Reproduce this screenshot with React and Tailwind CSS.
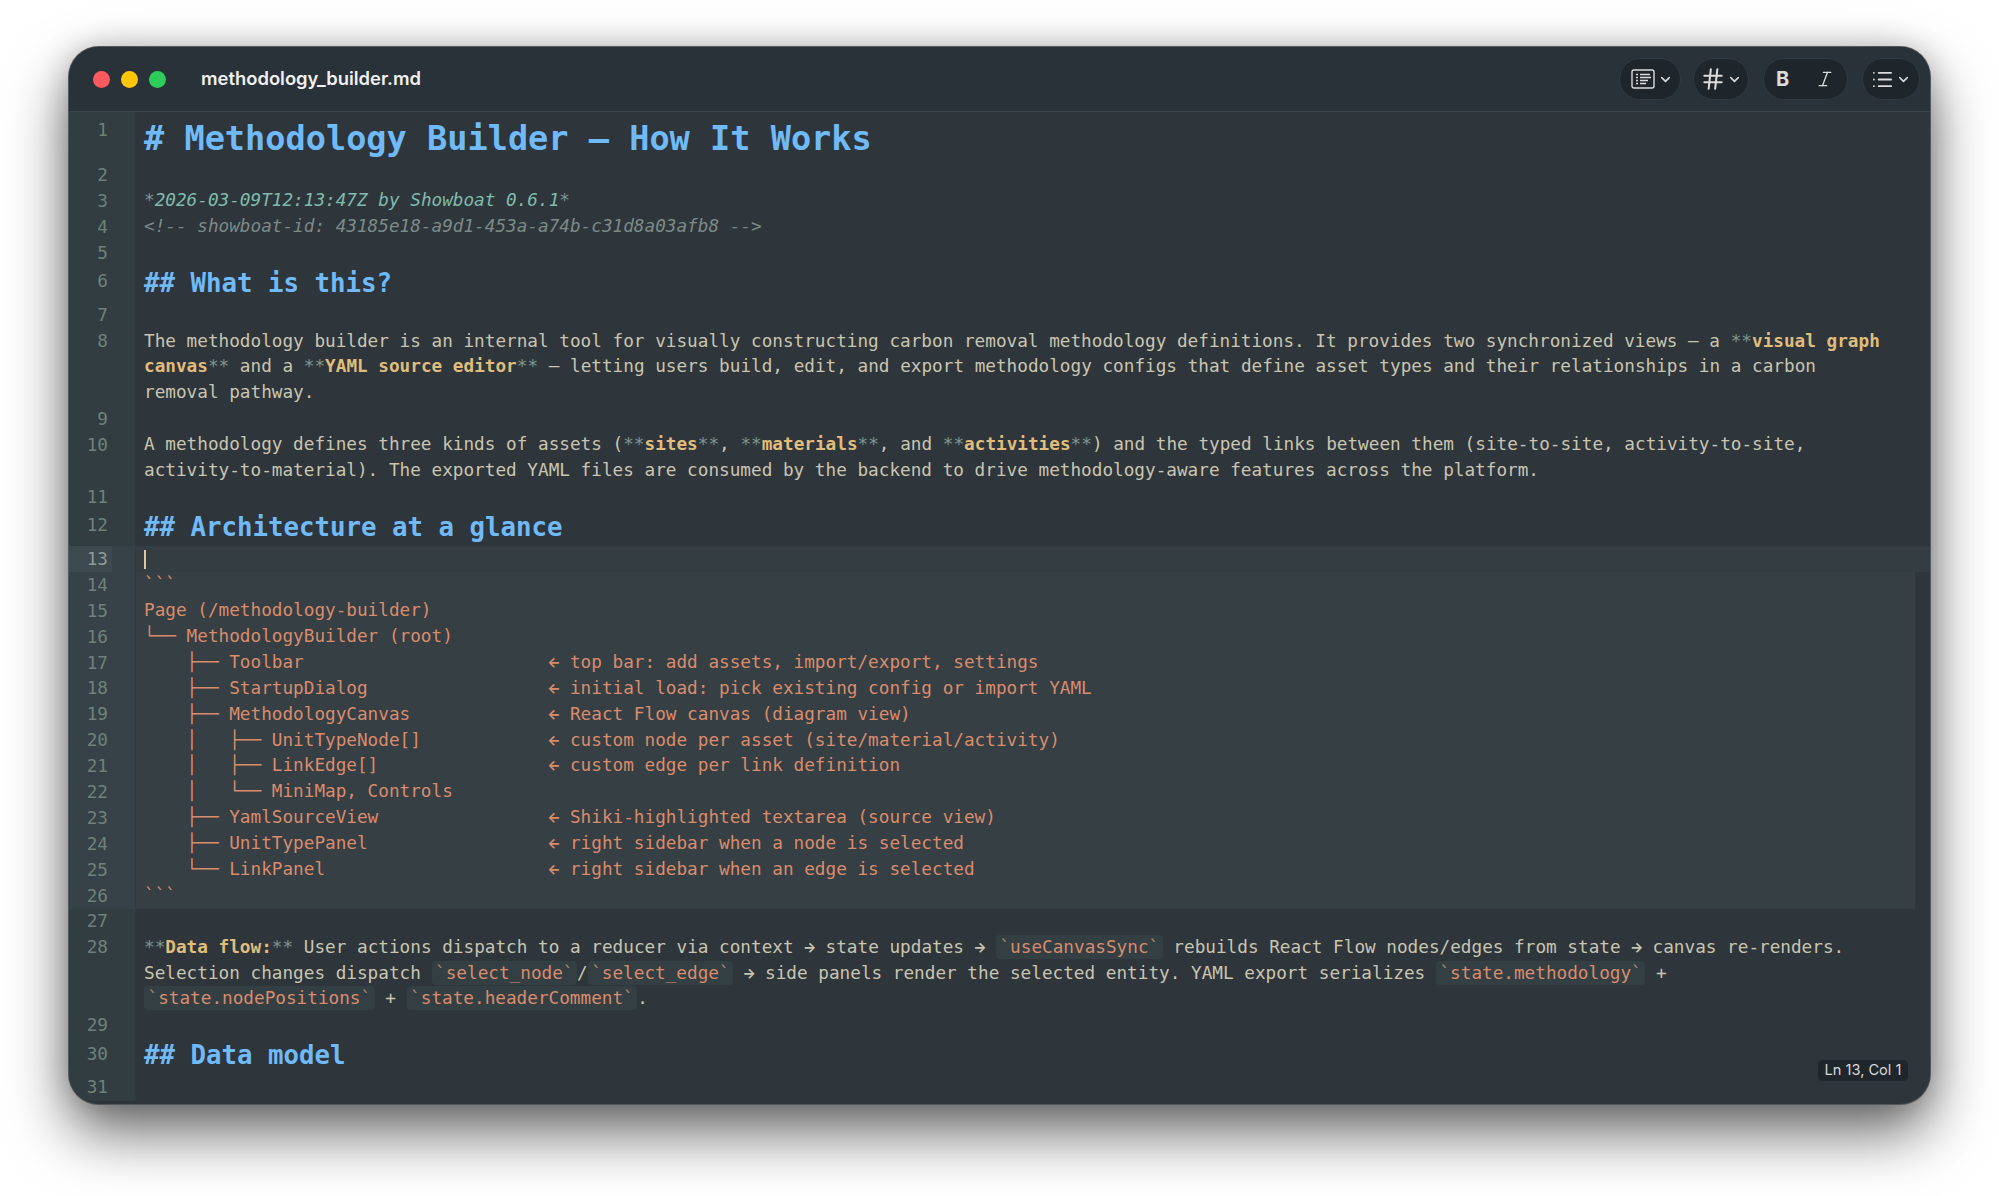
import { Hash, Italic, List, ChevronDown } from "lucide-react";

const mono = "font-['DejaVu_Sans_Mono',monospace]";

// arrows are narrower in the reference font, keep them one cell wide
const Arrow = ({ children }) => (
  <span className="inline-flex w-[1ch] justify-center">
    <span className="-translate-y-[1.5px] font-['Inter',sans-serif] text-[14px] font-bold">{children}</span>
  </span>
);

// inline bits of the markdown highlighting
const Bold = ({ children }) => (
  <>
    <span className="text-[#7f958f]">**</span>
    <span className="font-bold text-[#e0bd7c]">{children}</span>
    <span className="text-[#7f958f]">**</span>
  </>
);

const Code = ({ children }) => (
  <span className="rounded-[4px] bg-[#343f44] px-[3.5px] py-[2px] text-[#d98c6c]">
    <span className="text-[#a98a78]">`</span>
    {children}
    <span className="text-[#a98a78]">`</span>
  </span>
);

function Row({ n, lines, h, numTop = 0, active = false, code = false, children }) {
  const body = lines || [children];
  return (
    <div className={`flex ${active ? "bg-[#343d42]" : ""}`} style={h ? { height: h } : undefined}>
      <div
        className={`w-[67px] shrink-0 border-r border-[#2f393e] ${
          code || active ? "bg-[#364247]" : "bg-[#323d42]"
        }`}
      >
        <div
          className={`flex h-[25.9px] w-[43px] items-center justify-end pr-[4px] text-[17.7px] ${
            active ? "bg-[#3d494e] text-[#8d9c97]" : "text-[#6e8279]"
          }`}
          style={{ marginTop: numTop }}
        >
          {n}
        </div>
      </div>
      <div className={`mr-[15px] min-w-0 flex-1 pl-[8px] ${code ? "bg-[#363f44]" : ""}`}>
        {body.map((line, i) => (
          <div key={i} className="h-[25.9px] whitespace-pre text-[17.7px] leading-[25.9px]">
            {line}
          </div>
        ))}
      </div>
    </div>
  );
}

const H2 = ({ n, numTop = 3, children }) => (
  <Row n={n} h="36.5px" numTop={numTop}>
    <div className="h-[36.5px] text-[25.75px] font-bold leading-[35px] text-[#70baf8]">
      {children}
    </div>
  </Row>
);

const tree = [
  [15, "Page (/methodology-builder)", ""],
  [16, "└── MethodologyBuilder (root)", ""],
  [17, "    ├── Toolbar", "top bar: add assets, import/export, settings"],
  [18, "    ├── StartupDialog", "initial load: pick existing config or import YAML"],
  [19, "    ├── MethodologyCanvas", "React Flow canvas (diagram view)"],
  [20, "    │   ├── UnitTypeNode[]", "custom node per asset (site/material/activity)"],
  [21, "    │   ├── LinkEdge[]", "custom edge per link definition"],
  [22, "    │   └── MiniMap, Controls", ""],
  [23, "    ├── YamlSourceView", "Shiki-highlighted textarea (source view)"],
  [24, "    ├── UnitTypePanel", "right sidebar when a node is selected"],
  [25, "    └── LinkPanel", "right sidebar when an edge is selected"],
];

const Pill = ({ children, className = "" }) => (
  <div
    className={`flex h-[42px] items-center rounded-full border border-[#2f3a42] bg-[#1f262b] text-[#dcdcdc] ${className}`}
  >
    {children}
  </div>
);

const Chevron = () => <ChevronDown size={15} strokeWidth={2.6} className="text-[#d8d8d8]" />;

export default function App() {
  return (
    <div className="min-h-[1196px] bg-white pl-[69px] pt-[47px]">
      <div
        className={`relative h-[1057px] w-[1861px] overflow-hidden rounded-[30px] bg-[#2e353b] shadow-[0_0_0_1px_#54595d,0_28px_60px_rgba(0,0,0,0.6),0_0_30px_rgba(0,0,0,0.2)] ${mono}`}
      >
        {/* title bar */}
        <div className="flex h-[65px] items-center border-b border-[#3a464e] bg-[#2a3239] pl-[24px] pr-[10px]">
          <div className="flex gap-[11px]">
            <span className="size-[17px] rounded-full bg-[#fd5a5f]" />
            <span className="size-[17px] rounded-full bg-[#fdc606]" />
            <span className="size-[17px] rounded-full bg-[#2ecc5a]" />
          </div>
          <div className="ml-[35px] font-['Inter',sans-serif] text-[18.4px] font-semibold text-[#f0f0f0]">
            methodology_builder.md
          </div>
          <div className="ml-auto flex items-center gap-[12px]">
            <Pill className="w-[62px] justify-center gap-[3px] pl-[3px]">
              <svg width="24" height="20" viewBox="0 0 24 20" fill="none" stroke="currentColor" strokeWidth="1.4">
                <rect x="1" y="1" width="22" height="18" rx="2" />
                <path d="M5 5.5h2M9 5.5h10M5 8.5h2M9 8.5h11M5 11.5h2M9 11.5h8M5 14.5h2M9 14.5h6" />
              </svg>
              <Chevron />
            </Pill>
            <Pill className="w-[56px] justify-center gap-[1px]">
              <Hash size={26} strokeWidth={1.9} />
              <Chevron />
            </Pill>
            <Pill className="ml-[2px] w-[85px] justify-center gap-[26px]">
              <span className="font-['Inter',sans-serif] text-[20px] font-bold leading-none">B</span>
              <Italic size={20} strokeWidth={1.6} />
            </Pill>
            <Pill className="ml-[2px] w-[58px] justify-center gap-[2px]">
              <List size={23} strokeWidth={1.9} />
              <Chevron />
            </Pill>
          </div>
        </div>

        {/* editor */}
        <div className="text-[#c9c5b1]">
          <Row n={1} h="50.6px" numTop={5}>
            <div className="h-[50.6px] pt-[2px] text-[33.6px] font-bold leading-[50.6px] text-[#70baf8]">
              # Methodology Builder — How It Works
            </div>
          </Row>
          <Row n={2}> </Row>
          <Row n={3}>
            <span className="italic text-[#7f958f]">*</span>
            <span className="italic text-[#7fbcab]">2026-03-09T12:13:47Z by Showboat 0.6.1</span>
            <span className="italic text-[#7f958f]">*</span>
          </Row>
          <Row n={4}>
            <span className="italic text-[#7d8b87]">
              {"<!-- showboat-id: 43185e18-a9d1-453a-a74b-c31d8a03afb8 -->"}
            </span>
          </Row>
          <Row n={5}> </Row>
          <H2 n={6} numTop={2}>## What is this?</H2>
          <Row n={7}> </Row>
          <Row
            n={8}
            lines={[
              <>
                The methodology builder is an internal tool for visually constructing carbon removal methodology definitions. It provides two synchronized views — a{" "}
                <span className="text-[#7f958f]">**</span>
                <span className="font-bold text-[#e0bd7c]">visual graph</span>
              </>,
              <>
                <span className="font-bold text-[#e0bd7c]">canvas</span>
                <span className="text-[#7f958f]">**</span> and a <Bold>YAML source editor</Bold> — letting users build, edit, and export methodology configs that define asset types and their relationships in a carbon
              </>,
              "removal pathway.",
            ]}
          />
          <Row n={9}> </Row>
          <Row
            n={10}
            lines={[
              <>
                A methodology defines three kinds of assets (<Bold>sites</Bold>, <Bold>materials</Bold>, and <Bold>activities</Bold>) and the typed links between them (site-to-site, activity-to-site,
              </>,
              "activity-to-material). The exported YAML files are consumed by the backend to drive methodology-aware features across the platform.",
            ]}
          />
          <Row n={11}> </Row>
          <H2 n={12}>## Architecture at a glance</H2>
          <div className="relative">
            <Row n={13} active> </Row>
            <span className="absolute left-[75px] top-[4px] h-[19px] w-[2px] bg-[#e3c59a]" />
          </div>
          <div className="text-[#d98c6c]">
            <Row n={14} code>```</Row>
            {tree.map(([n, left, note]) => (
              <Row key={n} n={n} code>
                {note ? (
                  <>
                    {left.padEnd(38)}
                    <Arrow>←</Arrow> {note}
                  </>
                ) : (
                  left
                )}
              </Row>
            ))}
            <Row n={26} code>```</Row>
          </div>
          <Row n={27}> </Row>
          <Row
            n={28}
            lines={[
              <>
                <Bold>Data flow:</Bold> User actions dispatch to a reducer via context <Arrow>→</Arrow> state updates <Arrow>→</Arrow> <Code>useCanvasSync</Code> rebuilds React Flow nodes/edges from state <Arrow>→</Arrow> canvas re-renders.
              </>,
              <>
                Selection changes dispatch <Code>select_node</Code>/<Code>select_edge</Code> <Arrow>→</Arrow> side panels render the selected entity. YAML export serializes <Code>state.methodology</Code> +
              </>,
              <>
                <Code>state.nodePositions</Code> + <Code>state.headerComment</Code>.
              </>,
            ]}
          />
          <Row n={29}> </Row>
          <H2 n={30}>## Data model</H2>
          <Row n={31}> </Row>
        </div>

        {/* cursor position chip */}
        <div className="absolute bottom-[22px] right-[21px] flex h-[23px] w-[92px] items-center justify-center rounded-[6px] border border-[#2c363c] bg-[#1f262b] font-['Inter',sans-serif] text-[14.6px] text-[#d8d8d8]">
          Ln 13, Col 1
        </div>
      </div>
    </div>
  );
}
